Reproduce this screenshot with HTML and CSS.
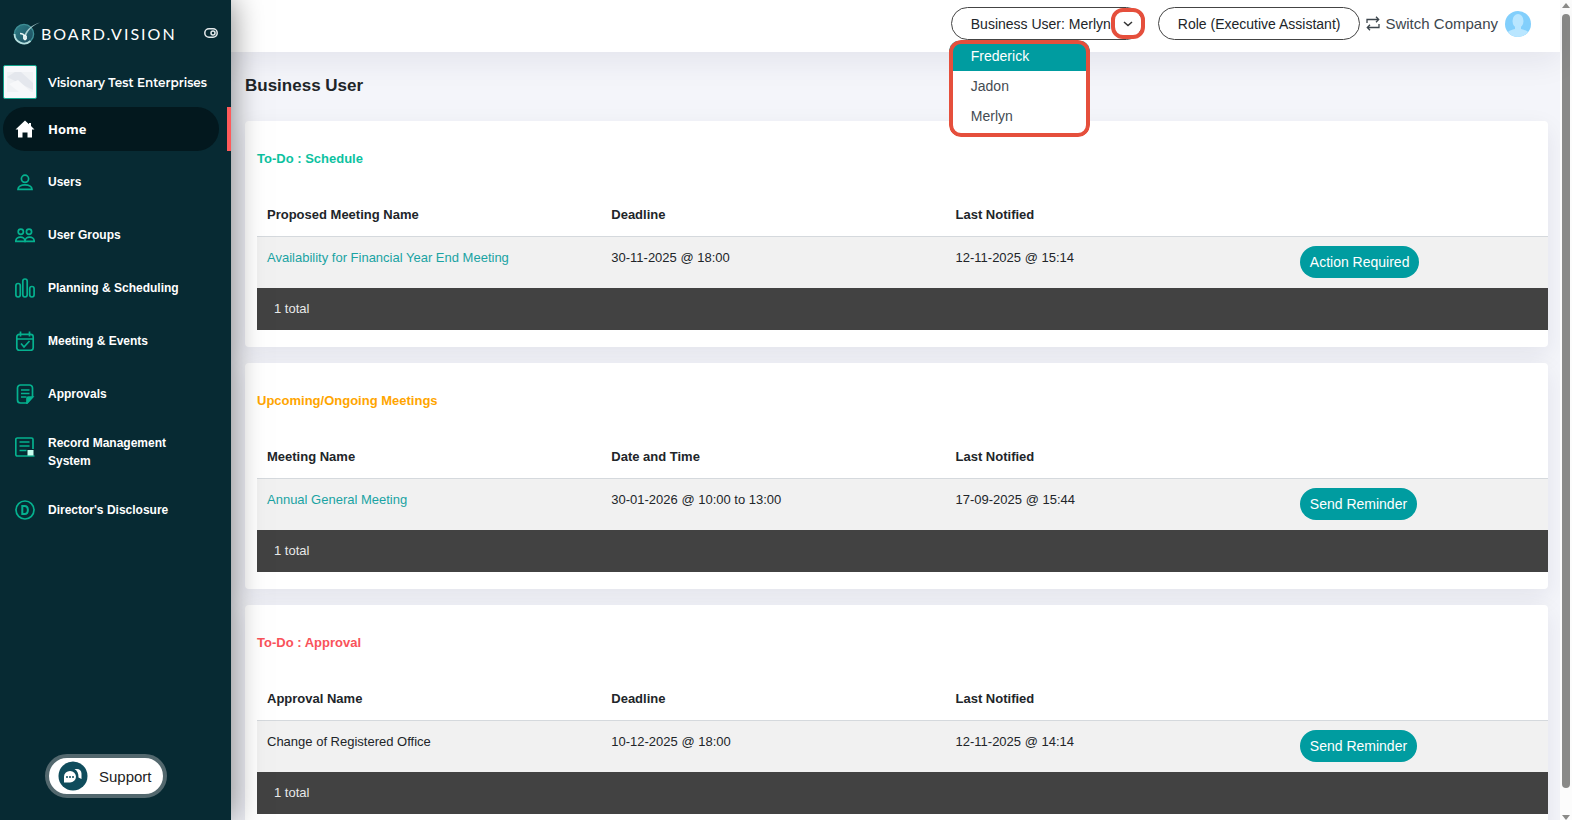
FILE: index.html
```
<!DOCTYPE html>
<html lang="en">

<head>
    <meta charset="UTF-8">
    <meta name="viewport" content="width=device-width, initial-scale=1.0">
    <title>Board.Vision - Business User</title>
    <link rel="stylesheet" href="styles.css">
</head>

<body>
    <aside class="sidebar">
        <div class="brand">
            <svg class="brand-mark" viewBox="0 0 28 26">
                <defs>
                    <linearGradient id="globe" x1="0" y1="0" x2="1" y2="1">
                        <stop offset="0" stop-color="#2d7f88"/>
                        <stop offset="1" stop-color="#1d4a5c"/>
                    </linearGradient>
                </defs>
                <circle cx="11" cy="14" r="9.6" fill="url(#globe)" stroke="#3f8f96" stroke-width="1.4"/>
                <path d="M1.500 14a9.600 9.600 0 0 0 16 7" fill="none" stroke="#b5dede" stroke-width="1.800"/>
                <path d="M27 2.500C20 4.500 13.500 9 11.200 15.500L13 16C15 10.500 19 6 27 2.500z" fill="#a9cccf"/>
                <path d="M7 13.500c2 0 3.500.5 4.500 2.500" fill="none" stroke="#e8f4f4" stroke-width="1.600"/>
                <ellipse cx="12" cy="17.500" rx="1.500" ry="2.500" fill="#d9ecec" stroke="#fff" stroke-width="1"/>
            </svg>
            <span class="brand-name">BOARD.VISION</span>
            <button class="collapse" aria-label="Collapse menu">
                <svg width="14" height="10" viewBox="0 0 14 10" fill="none" stroke="#e6eaec" stroke-width="1.500">
                    <rect x=".8" y=".8" width="12.400" height="8.400" rx="4.200"/>
                    <circle cx="9" cy="5" r="2"/>
                </svg>
            </button>
        </div>

        <div class="company">
            <span class="company-logo">
                <svg viewBox="0 0 26 20">
                    <rect width="26" height="20" fill="#f0f2f5"/>
                    <path d="M0 5l8-5h6l12 11v7z" fill="#e4e7ed"/>
                    <path d="M2 12l9-4 13 12H12z" fill="#f7f8fa"/>
                </svg>
            </span>
            <span class="company-name">Visionary Test Enterprises</span>
        </div>

        <nav class="menu">
            <a class="menu-item active" href="#">
                <svg class="icon" viewBox="0 0 20 20">
                    <path d="M10 1.500L.5 10.500H3v8h4.500V13.500h5v5H17v-8h2.500L16 7V4h-2v1.200z"/>
                </svg>
                <span>Home</span>
            </a>
            <a class="menu-item" href="#">
                <svg class="icon" viewBox="0 0 20 20">
                    <circle cx="10" cy="6.800" r="3.600"/>
                    <path d="M3 17.300c0-6 14-6 14 0z"/>
                </svg>
                <span>Users</span>
            </a>
            <a class="menu-item" href="#">
                <svg class="icon" viewBox="0 0 20 20">
                    <circle cx="5.800" cy="6.800" r="2.600"/>
                    <circle cx="14" cy="6.800" r="2.600"/>
                    <path d="M.8 16.300c0-5.500 9.200-5.500 9.200 0z"/>
                    <path d="M10 16.300c0-5.500 9.200-5.500 9.200 0z"/>
                </svg>
                <span>User Groups</span>
            </a>
            <a class="menu-item" href="#">
                <svg class="icon" viewBox="0 0 20 20">
                    <rect x=".9" y="5.500" width="4.400" height="13.500" rx="2.200"/>
                    <rect x="7.800" y="1" width="4.400" height="18" rx="2.200"/>
                    <rect x="14.700" y="8.500" width="4.400" height="10.500" rx="2.200"/>
                </svg>
                <span>Planning &amp; Scheduling</span>
            </a>
            <a class="menu-item" href="#">
                <svg class="icon" viewBox="0 0 20 20">
                    <rect x="1.800" y="3.300" width="16.400" height="16" rx="2.500"/>
                    <path d="M2 8h16M5.500.5v5M14.500.5v5M6 12.500l3 3.500 5.500-6"/>
                </svg>
                <span>Meeting &amp; Events</span>
            </a>
            <a class="menu-item" href="#">
                <svg class="icon" viewBox="0 0 20 20">
                    <path d="M17.500 13V4a3 3 0 0 0-3-3h-9a3 3 0 0 0-3 3v12a3 3 0 0 0 3 3h6.500z"/>
                    <path d="M6 6h8.500M6 9.500h8.500M6 13h5.500"/>
                    <path class="solid" d="M12 19v-4.500a1.500 1.500 0 0 1 1.500-1.500h4z"/>
                </svg>
                <span>Approvals</span>
            </a>
            <a class="menu-item" href="#">
                <svg class="icon" viewBox="0 0 20 20">
                    <path d="M18 12V2.500a1.500 1.500 0 0 0-1.500-1.500H2.300A1.500 1.500 0 0 0 .8 2.500v15A1.500 1.500 0 0 0 2.300 19H19.500"/>
                    <path d="M4.500 5h10M4.500 9h10M4.500 13.500h7"/>
                    <rect class="light" x="12.500" y="13" width="6" height="5.500"/>
                </svg>
                <span>Record Management System</span>
            </a>
            <a class="menu-item" href="#">
                <svg class="icon" viewBox="0 0 20 20">
                    <circle cx="10" cy="10" r="9"/>
                    <path d="M7.300 6h2.200c4.500 0 4.500 8 0 8H7.300z" stroke-width="2"/>
                </svg>
                <span>Director's Disclosure</span>
            </a>
        </nav>

        <button class="support">
            <svg width="30" height="30" viewBox="0 0 30 30">
                <circle cx="15" cy="15" r="14.500" fill="#0f4c5c"/>
                <path d="M6 21.500V15.500a6 5.800 0 1 1 6 6z" fill="#fff"/>
                <path d="M16.500 8H19a4.500 4.500 0 0 1 4.500 4.500v5.500l-3-1.500c0-4-1-6.500-4-8.500z" fill="#fff"/>
                <g fill="#0f4c5c">
                    <circle cx="9" cy="16" r="1"/>
                    <circle cx="12" cy="16" r="1"/>
                    <circle cx="15" cy="16" r="1"/>
                </g>
            </svg>
            <span>Support</span>
        </button>
    </aside>

    <div class="page">
        <header class="topbar">
            <div class="user-select">
                <button class="pill user-pill" aria-haspopup="listbox" aria-expanded="true">
                    <span>Business User: Merlyn</span>
                    <span class="chevron">
                        <svg width="10" height="6" viewBox="0 0 10 6" fill="none" stroke="#333" stroke-width="1.500">
                            <path d="M1 1l4 3.500L9 1"/>
                        </svg>
                    </span>
                </button>
                <div class="user-menu" role="listbox">
                    <button class="user-option selected" role="option">Frederick</button>
                    <button class="user-option" role="option">Jadon</button>
                    <button class="user-option" role="option">Merlyn</button>
                </div>
            </div>
            <button class="pill">Role (Executive Assistant)</button>
            <a class="switch" href="#">
                <svg width="14" height="16" viewBox="0 0 14 16" fill="none" stroke="#3d464d" stroke-width="1.300">
                    <path d="M1 7V3.500h11.500M10 .8l2.700 2.700L10 6.200M13 8v3.500H1.500M4 8.800L1.300 11.500 4 14.200"/>
                </svg>
                <span>Switch Company</span>
            </a>
            <svg class="avatar" viewBox="0 0 26 26">
                <defs>
                    <clipPath id="round"><circle cx="13" cy="13" r="13"/></clipPath>
                </defs>
                <g clip-path="url(#round)">
                    <rect width="26" height="26" fill="#82cffc"/>
                    <path d="M1 26c0-5 3-6.500 9-8v-4h6v4c6 1.500 9 3 9 8z" fill="#b9e6ff"/>
                    <ellipse cx="13" cy="10" rx="5.500" ry="7" fill="#b9e6ff"/>
                </g>
            </svg>
        </header>

        <main class="content">
            <h1>Business User</h1>

            <section class="card">
                <h2 class="green">To-Do : Schedule</h2>
                <table>
                    <thead>
                        <tr>
                            <th>Proposed Meeting Name</th>
                            <th>Deadline</th>
                            <th>Last Notified</th>
                            <th></th>
                        </tr>
                    </thead>
                    <tbody>
                        <tr>
                            <td><a href="#">Availability for Financial Year End Meeting</a></td>
                            <td>30-11-2025 @ 18:00</td>
                            <td>12-11-2025 @ 15:14</td>
                            <td><button class="action">Action Required</button></td>
                        </tr>
                    </tbody>
                    <tfoot>
                        <tr>
                            <td colspan="4">1 total</td>
                        </tr>
                    </tfoot>
                </table>
            </section>

            <section class="card">
                <h2 class="orange">Upcoming/Ongoing Meetings</h2>
                <table>
                    <thead>
                        <tr>
                            <th>Meeting Name</th>
                            <th>Date and Time</th>
                            <th>Last Notified</th>
                            <th></th>
                        </tr>
                    </thead>
                    <tbody>
                        <tr>
                            <td><a href="#">Annual General Meeting</a></td>
                            <td>30-01-2026 @ 10:00 to 13:00</td>
                            <td>17-09-2025 @ 15:44</td>
                            <td><button class="action">Send Reminder</button></td>
                        </tr>
                    </tbody>
                    <tfoot>
                        <tr>
                            <td colspan="4">1 total</td>
                        </tr>
                    </tfoot>
                </table>
            </section>

            <section class="card">
                <h2 class="red">To-Do : Approval</h2>
                <table>
                    <thead>
                        <tr>
                            <th>Approval Name</th>
                            <th>Deadline</th>
                            <th>Last Notified</th>
                            <th></th>
                        </tr>
                    </thead>
                    <tbody>
                        <tr>
                            <td>Change of Registered Office</td>
                            <td>10-12-2025 @ 18:00</td>
                            <td>12-11-2025 @ 14:14</td>
                            <td><button class="action">Send Reminder</button></td>
                        </tr>
                    </tbody>
                    <tfoot>
                        <tr>
                            <td colspan="4">1 total</td>
                        </tr>
                    </tfoot>
                </table>
            </section>
        </main>
    </div>

    <!-- scroll track -->
    <div class="scrollbar">
        <span class="arrow-up"></span>
        <span class="thumb"></span>
        <span class="arrow-down"></span>
    </div>
</body>

</html>
```
FILE: styles.css
```
* {
    box-sizing: border-box;
}

body {
    display: flex;
    height: 100vh;
    margin: 0;
    overflow: hidden;
    background-color: #f4f5fa;
    font-family: "Liberation Sans", Arial, sans-serif;
    font-size: 13px;
    color: #212529;
}

button {
    border: none;
    padding: 0;
    font-family: inherit;
    cursor: pointer;
}

a {
    color: #1aa3a3;
    text-decoration: none;
}

/* sidebar */
.sidebar {
    position: relative;
    z-index: 2;
    display: flex;
    flex-direction: column;
    flex: 0 0 auto;
    width: 231px;
    padding-bottom: 22px;
    background-color: #072a33;
    box-shadow: 0 0 30px rgba(0, 0, 0, 0.5);
    color: #fff;
}

.brand {
    display: flex;
    align-items: center;
    padding: 20px 13px 0;
}

.brand-mark {
    width: 28px;
    height: 26px;
}

.brand-name {
    flex: 1;
    font-family: Lato, sans-serif;
    font-size: 16px;
    letter-spacing: 2px;
}

.collapse {
    display: flex;
    background: none;
}

.company {
    display: flex;
    align-items: center;
    gap: 11px;
    padding: 19px 3px 0;
}

.company-logo {
    display: flex;
    align-items: center;
    justify-content: center;
    width: 34px;
    height: 34px;
    border: 1px solid #12a58d;
    border-radius: 2px;
    background-color: #f7f8fb;
}

.company-logo svg {
    width: 26px;
    height: 20px;
}

.company-name {
    font-family: Montserrat, Inter, sans-serif;
    font-size: 12px;
    font-weight: 600;
}

.menu {
    display: flex;
    flex-direction: column;
    gap: 9px;
    margin-top: 8px;
}

.menu-item {
    display: flex;
    align-items: center;
    gap: 13px;
    min-height: 44px;
    margin: 0 12px 0 3px;
    padding: 9px 40px 9px 12px;
    border-radius: 22px;
    color: #fff;
    font-size: 12px;
    font-weight: bold;
    line-height: 18px;
}

.menu-item.active {
    position: relative;
    background-color: #03181e;
    font-family: "Open Sans", sans-serif;
    font-size: 13px;
}

.menu-item.active::after {
    content: "";
    position: absolute;
    top: 0;
    right: -12px;
    width: 4px;
    height: 100%;
    background-color: #ff5a5a;
}

.icon {
    flex: 0 0 auto;
    align-self: flex-start;
    width: 20px;
    height: 20px;
    margin-top: 3px;
    fill: none;
    stroke: #05b18f;
    stroke-width: 1.7;
}

.active .icon {
    fill: #fff;
    stroke: none;
}

.icon .solid {
    fill: #05b18f;
}

.icon .light {
    fill: #c8fff0;
    stroke: none;
}

.support {
    display: flex;
    align-items: center;
    gap: 11px;
    align-self: flex-start;
    margin-top: auto;
    margin-left: 45px;
    padding: 3px 11px 3px 9px;
    border: 4px solid #53686e;
    border-radius: 22px;
    background-color: #fff;
    color: #222;
    font-size: 15px;
}

/* top bar */
.page {
    display: flex;
    flex-direction: column;
    flex: 1;
    min-width: 0;
}

.topbar {
    position: relative;
    z-index: 1;
    display: flex;
    flex: 0 0 auto;
    align-items: center;
    justify-content: flex-end;
    height: 52px;
    padding: 0 29px 5px 0;
    background-color: #fff;
    box-shadow: 0 8px 32px rgba(30, 30, 60, 0.08);
}

.pill {
    display: flex;
    align-items: center;
    height: 33px;
    padding: 0 19px;
    border: 1px solid #444;
    border-radius: 17px;
    background-color: #fff;
    color: #212529;
    font-size: 14px;
}

.user-select {
    position: relative;
    margin-right: 15px;
}

.user-pill {
    padding-right: 0;
}

.chevron {
    display: flex;
    align-items: center;
    justify-content: center;
    width: 34px;
    height: 31px;
    margin-right: -3px;
    border: 4px solid #e54f3c;
    border-radius: 12px;
}

.user-menu {
    position: absolute;
    top: 33px;
    left: -2px;
    width: 141px;
    padding: 1px 0 6px;
    border-radius: 12px;
    background-color: #fff;
    overflow: hidden;
}

/* red frame on top of the options */
.user-menu::after {
    content: "";
    position: absolute;
    inset: 0;
    border: 4px solid #e54f3c;
    border-radius: 12px;
    pointer-events: none;
}

.user-option {
    display: block;
    width: 100%;
    height: 30px;
    padding-left: 22px;
    background-color: #fff;
    color: #444b52;
    font-size: 14px;
    text-align: left;
}

.user-option.selected {
    background-color: #009ca0;
    color: #fff;
}

.switch {
    display: flex;
    align-items: center;
    gap: 5px;
    margin: 0 7px 0 6px;
    color: #3d464d;
    font-size: 15px;
}

.avatar {
    width: 26px;
    height: 26px;
}

/* content */
.content {
    display: flex;
    flex-direction: column;
    gap: 16px;
    padding: 24px 12px 0 14px;
}

h1 {
    margin: 0 0 9px;
    font-size: 17px;
    line-height: 20px;
}

.card {
    padding: 28px 0 17px 12px;
    border-radius: 4px;
    background-color: #fff;
    box-shadow: 0 8px 24px rgba(30, 30, 60, 0.08);
}

h2 {
    margin: 0 0 25px;
    font-size: 13px;
    line-height: 20px;
}

.green {
    color: #0cc2a0;
}

.orange {
    color: #ffa500;
}

.red {
    color: #f9525a;
}

table {
    width: 100%;
    border-collapse: collapse;
    table-layout: fixed;
}

th {
    height: 42px;
    padding: 0 10px;
    border-bottom: 1px solid #d5d9dd;
    text-align: left;
}

th:last-child {
    width: 20%;
}

td {
    height: 52px;
    padding: 9px 10px;
    background-color: #f1f1f1;
    vertical-align: top;
    line-height: 24px;
}

.action {
    height: 32px;
    padding: 0 10px;
    border-radius: 16px;
    background-color: #009ca0;
    color: #fff;
    font-size: 14px;
}

tfoot td {
    height: 42px;
    padding: 0 17px;
    background-color: #424242;
    color: #e8e8e8;
    vertical-align: middle;
}

/* scroll track */
.scrollbar {
    display: flex;
    flex-direction: column;
    align-items: center;
    flex: 0 0 12px;
    padding: 3px 0 0;
    background-color: #fcfcfc;
}

.thumb {
    flex: 1;
    width: 8px;
    margin: 6px 0 27px;
    border-radius: 4px;
    background-color: #8a8a88;
}

.arrow-up {
    border: 4px solid transparent;
    border-top: none;
    border-bottom: 5px solid #8a8a88;
}

.arrow-down {
    border: 4px solid transparent;
    border-bottom: none;
    border-top: 5px solid #8a8a88;
}
```
